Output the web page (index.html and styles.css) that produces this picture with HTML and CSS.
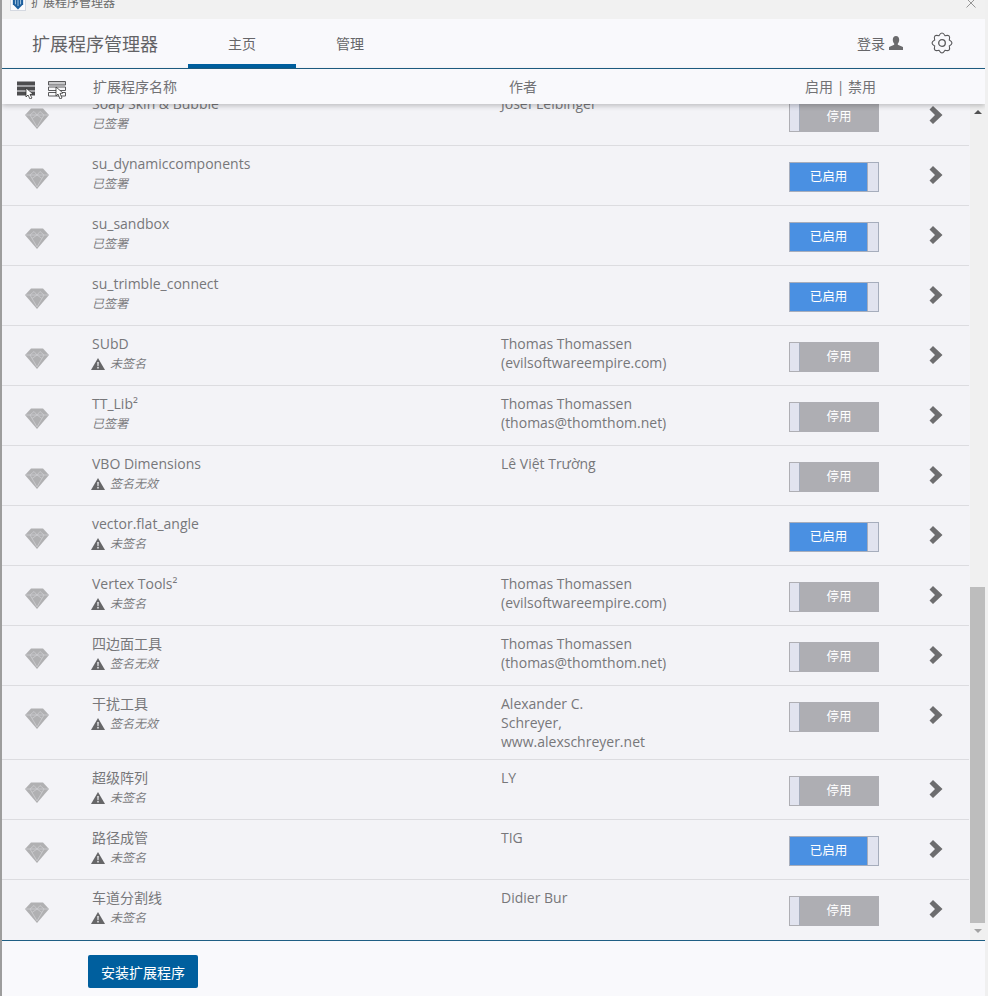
FILE: index.html
```html
<!DOCTYPE html>
<html lang="zh">
<head>
<meta charset="utf-8">
<title>扩展程序管理器</title>
<link rel="stylesheet" href="styles.css">
</head>
<body>
<svg class="defs" width="0" height="0" aria-hidden="true">
  <symbol id="gem" viewBox="0 0 24 21" preserveAspectRatio="none">
    <path d="M6 0.500H18L24 7L12 21L0 7Z" fill="#b0b0b2"/>
    <path d="M1 7H23M5 7L12 19L19 7M5 7L9 3.500L12 7L15 3.500L19 7M7 10.500L12 7L17 10.500" fill="none" stroke="#cdcdd1" stroke-width="0.8"/>
  </symbol>
  <symbol id="chev" viewBox="0 0 14 18">
    <path d="M0.500 3.500L4 0L13.500 9L4 18L0.500 14.500L6 9Z" fill="#6d6d6f"/>
  </symbol>
  <symbol id="warn" viewBox="0 0 14 12">
    <path d="M7 0L14 12H0Z" fill="#666668"/>
    <path d="M6.300 4H7.700L7.500 8.200H6.500ZM6.300 9H7.700V10.400H6.300Z" fill="#f3f3f7"/>
  </symbol>
</svg>
<div class="window">
  <div class="titlebar">
    <div class="title-left">
      <span class="app-box"><svg class="app-icon" viewBox="0 0 14 14"><path d="M1 1H13V8L7 14L1 8Z" fill="#1d5f9e"/><path d="M4 3V8M7 3V10M10 3V8" stroke="#bcd6ea" stroke-width="1"/></svg></span>
      <span>扩展程序管理器</span>
    </div>
    <svg class="close" viewBox="0 0 10 10"><path d="M0.500 0.500L9.500 9.500M9.500 0.500L0.500 9.500" stroke="#8a8a8a" stroke-width="0.9" fill="none"/></svg>
  </div>
  <header class="topbar">
    <div class="brand">扩展程序管理器</div>
    <nav class="tabs">
      <a class="tab active">主页</a>
      <a class="tab">管理</a>
    </nav>
    <div class="account">
      <span>登录</span>
      <svg class="user" viewBox="0 0 14 14"><path d="M7 0C9 0 10.200 1.500 10.200 3.700C10.200 5.500 9.500 6.800 8.800 7.500V8.700L14 11V14H0V11L5.200 8.700V7.500C4.500 6.800 3.800 5.500 3.800 3.700C3.800 1.500 5 0 7 0Z" fill="#6b6b6d"/></svg>
      <svg class="gear" viewBox="0 0 20 20"><path d="M12.760 3.350Q18.130 1.870 16.650 7.240Q21.500 10 16.650 12.760Q18.130 18.130 12.760 16.650Q10 21.500 7.240 16.650Q1.870 18.130 3.350 12.760Q-1.500 10 3.350 7.240Q1.870 1.870 7.240 3.350Q10 -1.500 12.760 3.350Z" fill="none" stroke="#59595b" stroke-width="1"/><circle cx="10" cy="10" r="3" fill="none" stroke="#59595b" stroke-width="1.200"/></svg>
    </div>
  </header>
  <div class="tablehead">
    <div class="view-icons">
      <svg class="view" viewBox="0 0 20 20"><path d="M1 2.500H19V6.500H1ZM1 7.500H19V11.500H1ZM1 12.500H19V16.500H1Z" fill="#4d4d4f"/><path d="M10 9L10 18L12 16L14 20L16 19L14 15.500L17 15Z" fill="#fff" stroke="#333" stroke-width="0.8"/></svg>
      <svg class="view" viewBox="0 0 20 20"><path d="M1.500 2.500H18.500V6H1.500Z" fill="#c9c9cb" stroke="#5a5a5c"/><path d="M1.500 8H18.500V11.500H1.500ZM1.500 13.500H18.500V17H1.500Z" fill="#f7f7f9" stroke="#5a5a5c"/><path d="M9 8L9 17L11 15L13 20L15 19L13 14.500L16 14Z" fill="#fff" stroke="#333" stroke-width="0.8"/></svg>
    </div>
    <div class="col-name">扩展程序名称</div>
    <div class="col-author">作者</div>
    <div class="col-state">启用 | 禁用</div>
  </div>
  <div class="body">
    <main class="list">
      <div class="row"><svg class="gem"><use href="#gem"/></svg><div class="info"><div class="name">Soap Skin &amp; Bubble</div><div class="sig">已签署</div></div><div class="author">Josef Leibinger</div><div class="toggle off"><i></i><b>停用</b></div><svg class="chev"><use href="#chev"/></svg></div>
      <div class="row"><svg class="gem"><use href="#gem"/></svg><div class="info"><div class="name">su_dynamiccomponents</div><div class="sig">已签署</div></div><div class="author"></div><div class="toggle on"><b>已启用</b><i></i></div><svg class="chev"><use href="#chev"/></svg></div>
      <div class="row"><svg class="gem"><use href="#gem"/></svg><div class="info"><div class="name">su_sandbox</div><div class="sig">已签署</div></div><div class="author"></div><div class="toggle on"><b>已启用</b><i></i></div><svg class="chev"><use href="#chev"/></svg></div>
      <div class="row"><svg class="gem"><use href="#gem"/></svg><div class="info"><div class="name">su_trimble_connect</div><div class="sig">已签署</div></div><div class="author"></div><div class="toggle on"><b>已启用</b><i></i></div><svg class="chev"><use href="#chev"/></svg></div>
      <div class="row"><svg class="gem"><use href="#gem"/></svg><div class="info"><div class="name">SUbD</div><div class="sig"><svg class="warn"><use href="#warn"/></svg>未签名</div></div><div class="author">Thomas Thomassen<br>(evilsoftwareempire.com)</div><div class="toggle off"><i></i><b>停用</b></div><svg class="chev"><use href="#chev"/></svg></div>
      <div class="row"><svg class="gem"><use href="#gem"/></svg><div class="info"><div class="name">TT_Lib²</div><div class="sig">已签署</div></div><div class="author">Thomas Thomassen<br>(thomas@thomthom.net)</div><div class="toggle off"><i></i><b>停用</b></div><svg class="chev"><use href="#chev"/></svg></div>
      <div class="row"><svg class="gem"><use href="#gem"/></svg><div class="info"><div class="name">VBO Dimensions</div><div class="sig"><svg class="warn"><use href="#warn"/></svg>签名无效</div></div><div class="author">Lê Việt Trường</div><div class="toggle off"><i></i><b>停用</b></div><svg class="chev"><use href="#chev"/></svg></div>
      <div class="row"><svg class="gem"><use href="#gem"/></svg><div class="info"><div class="name">vector.flat_angle</div><div class="sig"><svg class="warn"><use href="#warn"/></svg>未签名</div></div><div class="author"></div><div class="toggle on"><b>已启用</b><i></i></div><svg class="chev"><use href="#chev"/></svg></div>
      <div class="row"><svg class="gem"><use href="#gem"/></svg><div class="info"><div class="name">Vertex Tools²</div><div class="sig"><svg class="warn"><use href="#warn"/></svg>未签名</div></div><div class="author">Thomas Thomassen<br>(evilsoftwareempire.com)</div><div class="toggle off"><i></i><b>停用</b></div><svg class="chev"><use href="#chev"/></svg></div>
      <div class="row"><svg class="gem"><use href="#gem"/></svg><div class="info"><div class="name">四边面工具</div><div class="sig"><svg class="warn"><use href="#warn"/></svg>签名无效</div></div><div class="author">Thomas Thomassen<br>(thomas@thomthom.net)</div><div class="toggle off"><i></i><b>停用</b></div><svg class="chev"><use href="#chev"/></svg></div>
      <div class="row tall"><svg class="gem"><use href="#gem"/></svg><div class="info"><div class="name">干扰工具</div><div class="sig"><svg class="warn"><use href="#warn"/></svg>签名无效</div></div><div class="author">Alexander C.<br>Schreyer,<br>www.alexschreyer.net</div><div class="toggle off"><i></i><b>停用</b></div><svg class="chev"><use href="#chev"/></svg></div>
      <div class="row"><svg class="gem"><use href="#gem"/></svg><div class="info"><div class="name">超级阵列</div><div class="sig"><svg class="warn"><use href="#warn"/></svg>未签名</div></div><div class="author">LY</div><div class="toggle off"><i></i><b>停用</b></div><svg class="chev"><use href="#chev"/></svg></div>
      <div class="row"><svg class="gem"><use href="#gem"/></svg><div class="info"><div class="name">路径成管</div><div class="sig"><svg class="warn"><use href="#warn"/></svg>未签名</div></div><div class="author">TIG</div><div class="toggle on"><b>已启用</b><i></i></div><svg class="chev"><use href="#chev"/></svg></div>
      <div class="row last"><svg class="gem"><use href="#gem"/></svg><div class="info"><div class="name">车道分割线</div><div class="sig"><svg class="warn"><use href="#warn"/></svg>未签名</div></div><div class="author">Didier Bur</div><div class="toggle off"><i></i><b>停用</b></div><svg class="chev"><use href="#chev"/></svg></div>
    </main>
    <div class="scrollbar">
      <div class="arrow up"></div>
      <div class="track"><div class="thumb"></div></div>
      <div class="arrow down"></div>
    </div>
  </div>
  <footer class="footer">
    <button class="install">安装扩展程序</button>
  </footer>
</div>
</body>
</html>
```
FILE: styles.css
```css
* { box-sizing: border-box; }
html, body { margin: 0; height: 100%; overflow: hidden; }
body {
  width: 988px;
  height: 996px;
  font-family: "Open Sans", "Noto Sans CJK SC", sans-serif;
  color: #6f6f72;
  background: #f3f3f7;
}
.defs { display: block; height: 0; }
.window {
  height: 996px;
  display: flex;
  flex-direction: column;
  border-left: 2px solid #9d9d9d;
  border-right: 3px solid #f0f0f0;
  overflow: hidden;
}
.titlebar {
  height: 19px;
  flex: none;
  background: #f1f1f1;
  display: flex;
  align-items: flex-start;
  justify-content: space-between;
  padding: 0 9px 0 8px;
  overflow: hidden;
}
.title-left {
  display: flex;
  align-items: center;
  gap: 5px;
  margin-top: -6px;
  font-size: 12px;
  line-height: 18px;
  color: #6b6b6b;
}
.app-box {
  width: 16px;
  height: 16px;
  display: flex;
  align-items: center;
  justify-content: center;
  background: #fbfbfd;
  border: 1px solid #d4d8e0;
}
.app-icon { width: 12px; height: 13px; }
.close { width: 10px; height: 10px; margin-top: -2px; }
.topbar {
  height: 50px;
  flex: none;
  display: flex;
  background: #f9f9fc;
  border-bottom: 1px solid #1f5f84;
  padding-left: 30px;
}
.brand {
  width: 156px;
  font-size: 18px;
  line-height: 50px;
  color: #636366;
}
.tabs { display: flex; }
.tab {
  width: 108px;
  text-align: center;
  font-size: 14px;
  line-height: 50px;
  color: #666669;
  height: 49px;
}
.tab.active { border-bottom: 4px solid #005f9e; }
.account {
  margin-left: auto;
  display: flex;
  align-items: center;
  font-size: 14px;
  color: #666669;
  padding: 0 32px 2px 0;
  height: 49px;
}
.user { width: 14px; height: 14px; margin-left: 4px; margin-top: 1px; }
.gear { width: 22px; height: 22px; margin-left: 28px; }
.tablehead {
  height: 35px;
  flex: none;
  display: flex;
  align-items: center;
  padding-bottom: 1px;
  background: #f9f9fc;
  font-size: 14px;
  color: #727275;
  position: relative;
  z-index: 2;
  box-shadow: 0 2px 5px rgba(0, 0, 0, 0.22);
}
.view-icons {
  width: 91px;
  display: flex;
  gap: 11px;
  padding: 5px 0 0 14px;
}
.view { width: 20px; height: 20px; }
.col-name { width: 416px; }
.col-author { width: 296px; }
.col-state { white-space: nowrap; }
.body {
  flex: none;
  height: 836px;
  display: flex;
  overflow: hidden;
}
.list {
  width: 967px;
  flex: none;
  margin-top: -18px;
}
.row {
  height: 60px;
  display: flex;
  border-bottom: 1px solid #dcdce0;
  position: relative;
}
.row.tall { height: 74px; }
.row.last { border-bottom: 0; height: 61px; }
.gem {
  width: 24px;
  height: 21px;
  flex: none;
  margin: 22px 0 0 23px;
}
.info {
  width: 409px;
  flex: none;
  margin-left: 43px;
  padding-top: 8px;
}
.name { font-size: 14px; line-height: 20px; color: #77777a; }
.sig {
  display: flex;
  align-items: center;
  margin-top: 1px;
  font-size: 12px;
  line-height: 18px;
  font-style: italic;
  color: #7b7b7e;
}
.warn { width: 14px; height: 12px; margin-right: 5px; margin-left: -1px; flex: none; }
.author {
  width: 288px;
  flex: none;
  padding-top: 8px;
  font-size: 14px;
  line-height: 19px;
  color: #77777a;
}
.toggle {
  width: 90px;
  height: 30px;
  flex: none;
  margin-top: 16px;
  display: flex;
  border: 1px solid #a6adbc;
  background: #e1e3ef;
  font-size: 12.5px;
  color: #fff;
}
.toggle b { font-weight: 400; flex: 1; text-align: center; line-height: 28px; }
.toggle i { display: block; }
.toggle.on b { background: #4a90e2; }
.toggle.on i { width: 11px; border-left: 1px solid #a6adbc; }
.toggle.off { border-color: #aeaeb4; }
.toggle.off i { width: 10px; border-right: 1px solid #a6adbc; }
.toggle.off b { background: #aeaeb3; }
.chev {
  width: 14px;
  height: 18px;
  flex: none;
  margin: 20px 0 0 50px;
}
.scrollbar {
  width: 16px;
  flex: none;
  margin-left: 1px;
  background: #f0f0f0;
  display: flex;
  flex-direction: column;
}
.track { flex: 1; display: flex; flex-direction: column; justify-content: flex-end; }
.thumb { height: 336px; background: #bdbdbd; }
.arrow { height: 17px; flex: none; position: relative; }
.arrow::after {
  content: "";
  position: absolute;
  left: 4px;
  border-left: 4px solid transparent;
  border-right: 4px solid transparent;
}
.arrow.up::after { top: 6px; border-bottom: 4px solid #505050; }
.arrow.down::after { top: 6px; border-top: 4px solid #a3a3a3; }
.footer {
  flex: 1;
  background: #f9f9fc;
  border-top: 1px solid #1f5f84;
  padding: 14px 0 0 86px;
}
.install {
  display: block;
  width: 110px;
  height: 33px;
  background: #005f9e;
  border: 0;
  border-radius: 2px;
  color: #fff;
  font-family: inherit;
  font-size: 14px;
  padding: 0;
}
```
